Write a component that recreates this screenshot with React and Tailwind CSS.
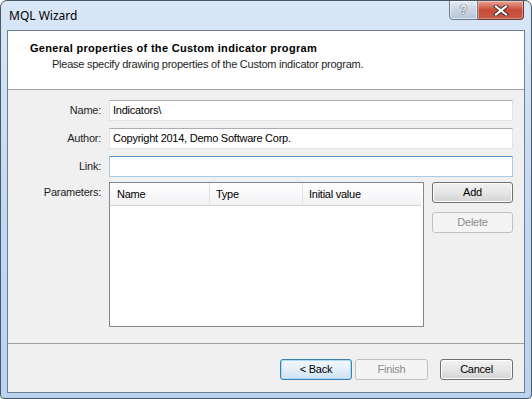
import React from 'react'

const font = { fontFamily: '"Liberation Sans", Arial, sans-serif' }

const Field = ({ label, value, focused }) => (
  <div className="flex items-center h-[21px] mb-[7px]">
    <div className="w-[93px] text-right text-[11px] tracking-[-0.25px] text-[#1e1e1e]">{label}</div>
    <div
      className={`ml-[8px] flex-1 h-[21px] flex items-center px-[3px] bg-white text-[11px] tracking-[-0.25px] text-black border ${
        focused
          ? 'border-[#a9cbe6] border-t-[#5893c4]'
          : 'border-[#e2e3ea] border-t-[#abadb3]'
      }`}
    >
      {value}
    </div>
  </div>
)

const Button = ({ children, disabled, primary, className = '' }) => (
  <div
    className={`h-[21px] rounded-[3px] border flex items-center justify-center text-[11px] tracking-[-0.25px] ${
      disabled
        ? 'border-[#bfc2c5] bg-[#f4f4f4] text-[#8c8c8c]'
        : primary
          ? 'border-[#3c7fb1] bg-gradient-to-b from-[#f2f8fc] via-[#e3eff8] to-[#cfe3f2] text-black shadow-[inset_0_0_0_1px_#a8dcf7]'
          : 'border-[#707070] bg-gradient-to-b from-[#f2f2f2] via-[#e6e6e6] to-[#d3d3d3] text-black shadow-[inset_0_0_0_1px_#fcfcfc]'
    } ${className}`}
  >
    {children}
  </div>
)

export default function App() {
  return (
    <div className="w-[532px] h-[399px] bg-white" style={font}>
      <div className="w-[532px] h-[399px] flex flex-col border border-[#4a5866] rounded-t-[7px] rounded-b-[4px] bg-gradient-to-b from-[#d9e7f7] via-[#c2d9f4] to-[#b9d3f1] overflow-hidden">
        {/* title bar */}
        <div className="h-[29px] flex items-start relative">
          <div className="pl-[8px] pt-[6px] text-[12px] text-black" style={{ fontFamily: '"Noto Sans", "Open Sans", sans-serif' }}>
            MQL Wizard
          </div>
          <div className="absolute right-[7px] top-[-1px] flex">
            <div className="w-[29px] h-[20px] border border-[#6d7a8a] rounded-bl-[4px] bg-gradient-to-b from-[#e5ecf5] via-[#c9d5e3] to-[#b5c4d6] flex items-center justify-center shadow-[inset_0_0_0_1px_rgba(255,255,255,0.6)]">
              <span className="text-[12px] font-bold text-white" style={{ textShadow: '0 0 1px #333, 0 0 1px #333' }}>?</span>
            </div>
            <div className="w-[46px] h-[20px] border border-[#6d3a33] border-l-0 rounded-br-[4px] bg-gradient-to-b from-[#e8a493] via-[#c9493a] to-[#c35a45] flex items-center justify-center shadow-[inset_0_0_0_1px_rgba(255,255,255,0.35)]">
              <svg width="16" height="11" viewBox="0 0 16 11">
                <path d="M3 1.5 L13 9.5 M13 1.5 L3 9.5" stroke="#3a2a28" strokeWidth="4" strokeLinecap="square" />
                <path d="M3 1.5 L13 9.5 M13 1.5 L3 9.5" stroke="#ffffff" strokeWidth="2.2" strokeLinecap="square" />
              </svg>
            </div>
          </div>
        </div>

        {/* client */}
        <div className="mx-[6px] mb-[5px] flex-1 border border-[#6f7d8f] bg-[#f0f0f0] flex flex-col">
          <div className="h-[59px] bg-white border-b border-[#a0a0a0] pl-[22px] pt-[10px]">
            <div className="text-[11px] font-bold tracking-[0.3px] text-black leading-[14px]">
              General properties of the Custom indicator program
            </div>
            <div className="pl-[22px] mt-[2px] text-[11px] tracking-[-0.25px] text-[#1e1e1e] leading-[14px]">
              Please specify drawing properties of the Custom indicator program.
            </div>
          </div>

          <div className="h-[254px] border-b border-[#a0a0a0] pt-[10px] pr-[11px]">
            <Field label="Name:" value="Indicators\" />
            <Field label="Author:" value="Copyright 2014, Demo Software Corp." />
            <Field label="Link:" value="" focused />

            <div className="flex mt-[-2px]">
              <div className="w-[93px] pt-[2px] text-right text-[11px] tracking-[-0.25px] text-[#1e1e1e]">Parameters:</div>
              <div className="ml-[8px] w-[315px] h-[145px] border border-[#828790] bg-white">
                <div className="flex h-[23px] mr-[2px] bg-gradient-to-b from-white to-[#f1f2f4] border-b border-[#d5d5d5] text-[11px] tracking-[-0.25px] text-black">
                  <div className="w-[100px] flex items-center pl-[7px] border-r border-[#e0e1e3]">Name</div>
                  <div className="w-[93px] flex items-center pl-[6px] border-r border-[#e0e1e3]">Type</div>
                  <div className="flex-1 flex items-center pl-[6px]">Initial value</div>
                </div>
              </div>
              <div className="ml-[8px] flex-1 flex flex-col gap-[9px]">
                <Button>Add</Button>
                <Button disabled>Delete</Button>
              </div>
            </div>
          </div>

          <div className="flex justify-end gap-[3px] pt-[15px] pr-[11px]">
            <Button primary className="w-[72px]">&lt; Back</Button>
            <Button disabled className="w-[73px]">Finish</Button>
            <Button className="w-[73px] ml-[9px]">Cancel</Button>
          </div>
        </div>
      </div>
    </div>
  )
}
